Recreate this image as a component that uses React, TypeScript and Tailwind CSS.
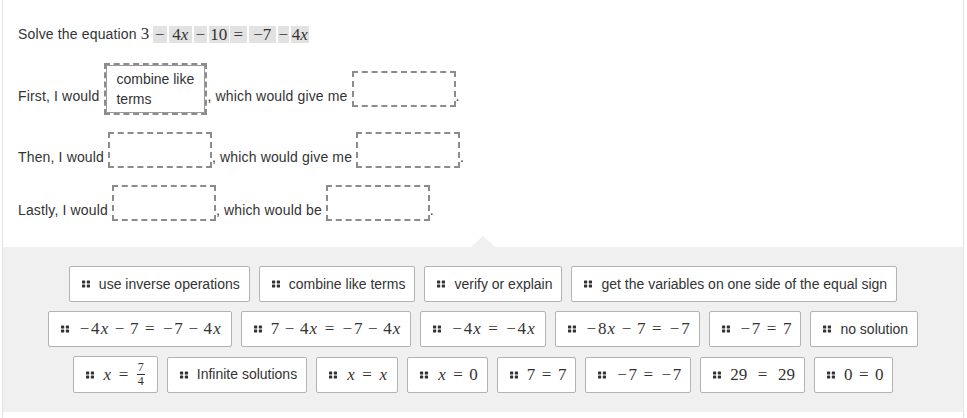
import type { ReactNode } from 'react';

type Tok = { t: string; kind: 'num' | 'var' | 'bin' | 'un' | 'rel' };

function tokenize(expr: string): Tok[] {
  const out: Tok[] = [];
  for (const ch of expr.replace(/\s+/g, '')) {
    const prev = out[out.length - 1];
    if (ch === '=') out.push({ t: ch, kind: 'rel' });
    else if (ch === '−')
      out.push({ t: ch, kind: prev && (prev.kind === 'num' || prev.kind === 'var') ? 'bin' : 'un' });
    else if (ch === 'x') out.push({ t: ch, kind: 'var' });
    else out.push({ t: ch, kind: 'num' });
  }
  return out;
}

// mimics the MathJax spacing of the original (17px TeX)
function MathExpr({ expr, wide = false }: { expr: string; wide?: boolean }) {
  return (
    <span className="inline-flex items-center font-['Liberation_Serif',serif] text-[17px] leading-[20px] tracking-normal text-[#333]">
      {tokenize(expr).map((tok, i) => {
        if (tok.kind === 'num')
          return (
            <span key={i} className="inline-block w-[8.5px] text-center">
              {tok.t}
            </span>
          );
        if (tok.kind === 'var')
          return (
            <span key={i} className="inline-block w-[9.7px] text-center italic">
              {tok.t}
            </span>
          );
        if (tok.kind === 'un')
          return (
            <span key={i} className="inline-block w-[13.2px] text-center">
              {tok.t}
            </span>
          );
        if (tok.kind === 'bin')
          return (
            <span key={i} className="inline-block w-[13.2px] mx-[3.8px] text-center">
              {tok.t}
            </span>
          );
        return (
          <span
            key={i}
            className={wide ? 'inline-block w-[13.2px] mx-[8.7px] text-center' : 'inline-block w-[13.2px] mx-[4.7px] text-center'}
          >
            {tok.t}
          </span>
        );
      })}
    </span>
  );
}

function GripIcon() {
  return (
    <svg width="8" height="8" viewBox="0 0 8 8" className="shrink-0">
      <rect x="0" y="0.5" width="3.2" height="3" rx="0.6" fill="#333" />
      <rect x="4.8" y="0.5" width="3.2" height="3" rx="0.6" fill="#333" />
      <rect x="0" y="4.5" width="3.2" height="3" rx="0.6" fill="#333" />
      <rect x="4.8" y="4.5" width="3.2" height="3" rx="0.6" fill="#333" />
    </svg>
  );
}

function Chip({ children, tall = false }: { children: ReactNode; tall?: boolean }) {
  return (
    <div
      className={
        tall
          ? 'flex items-center gap-[9px] h-[37px] pl-[12px] pr-[10px] bg-white border border-[#b3b3b3] rounded-[2px]'
          : 'flex items-center gap-[9px] h-[36px] pl-[12px] pr-[9px] bg-white border border-[#b3b3b3] rounded-[2px]'
      }
    >
      <GripIcon />
      {children}
    </div>
  );
}

function EmptySlot() {
  return <div className="w-[104px] h-[36px] ml-[4px] border-2 border-dashed border-[#8c8c8c] bg-white shrink-0" />;
}

function Sentence({ children }: { children: ReactNode }) {
  return <span className="mt-[13px] leading-[20px] whitespace-nowrap tracking-[0.15px]">{children}</span>;
}

function Fraction() {
  return (
    <span className="inline-flex items-center font-['Liberation_Serif',serif] text-[17px] text-[#333]">
      <span className="inline-block w-[9.7px] text-center italic">x</span>
      <span className="inline-block w-[13.2px] mx-[4.7px] text-center">=</span>
      <span className="inline-flex flex-col items-center mx-[2px] text-[12px] leading-[11px]">
        <span className="px-[1px] pb-[1px] border-b border-[#333]">7</span>
        <span className="pt-[1px]">4</span>
      </span>
    </span>
  );
}

const hl = 'inline-block h-[17px] leading-[17px] bg-[#e2e2e2] text-center';

export default function App() {
  return (
    <div className="min-h-[418px] bg-white font-['Liberation_Sans',Arial,sans-serif] text-[14px] text-[#333]">
      <div className="ml-[2px] w-[962px] min-h-[418px] border-x border-[#e3e3e3]">
        {/* Question */}
        <div className="pl-[15px] pt-[24px]">
          <div className="flex items-center h-[20px]">
            <span className="tracking-[0.15px]">Solve the equation</span>
            <span className="ml-[4px] flex items-center font-['Liberation_Serif',serif] text-[17px]">
              <span className="inline-block w-[8.5px] text-center">3</span>
              <span className={`${hl} ml-[3.5px] w-[14px]`}>−</span>
              <span className={`${hl} ml-[2px] w-[23px]`}>
                4<i>x</i>
              </span>
              <span className={`${hl} ml-[2px] w-[13px]`}>−</span>
              <span className={`${hl} ml-[2px] w-[20px]`}>10</span>
              <span className={`${hl} ml-[1px] w-[17px]`}>=</span>
              <span className={`${hl} ml-[2px] w-[27px]`}>−7</span>
              <span className={`${hl} ml-[2px] w-[11px]`}>−</span>
              <span className={`${hl} ml-[2px] w-[18px]`}>
                4<i>x</i>
              </span>
            </span>
          </div>

          <div className="mt-[19px] flex flex-col gap-[17px]">
            <div className="flex items-center">
              <Sentence>First, I would</Sentence>
              <div className="w-[103px] ml-[5px] border-2 border-dashed border-[#8c8c8c] shrink-0">
                <div className="border border-[#9a9a9a] bg-white px-[9px] py-[3px] leading-[20px]">
                  combine like terms
                </div>
              </div>
              <Sentence>, which would give me</Sentence>
              <EmptySlot />
              <Sentence>.</Sentence>
            </div>
            <div className="flex items-center">
              <Sentence>Then, I would</Sentence>
              <EmptySlot />
              <Sentence>, which would give me</Sentence>
              <EmptySlot />
              <Sentence>.</Sentence>
            </div>
            <div className="flex items-center">
              <Sentence>Lastly, I would</Sentence>
              <EmptySlot />
              <Sentence>, which would be</Sentence>
              <EmptySlot />
              <Sentence>.</Sentence>
            </div>
          </div>
        </div>

        {/* Answer tray */}
        <div className="relative mt-[26px] bg-[#f0f0f0] pt-[19px] pb-[19px] flex flex-col items-center gap-[9px]">
          <div className="absolute left-1/2 -translate-x-1/2 -top-[11px] w-0 h-0 border-x-[12px] border-x-transparent border-b-[11px] border-b-[#f0f0f0]" />
          <div className="flex justify-center gap-[9px]">
            <Chip>use inverse operations</Chip>
            <Chip>combine like terms</Chip>
            <Chip>verify or explain</Chip>
            <Chip>get the variables on one side of the equal sign</Chip>
          </div>
          <div className="flex justify-center gap-[9px]">
            <Chip>
              <MathExpr expr="−4x − 7 = −7 − 4x" />
            </Chip>
            <Chip>
              <MathExpr expr="7 − 4x = −7 − 4x" />
            </Chip>
            <Chip>
              <MathExpr expr="−4x = −4x" />
            </Chip>
            <Chip>
              <MathExpr expr="−8x − 7 = −7" />
            </Chip>
            <Chip>
              <MathExpr expr="−7 = 7" />
            </Chip>
            <Chip>no solution</Chip>
          </div>
          <div className="flex items-center justify-center gap-[9px]">
            <Chip tall>
              <Fraction />
            </Chip>
            <Chip>Infinite solutions</Chip>
            <Chip>
              <MathExpr expr="x = x" />
            </Chip>
            <Chip>
              <MathExpr expr="x = 0" />
            </Chip>
            <Chip>
              <MathExpr expr="7 = 7" />
            </Chip>
            <Chip>
              <MathExpr expr="−7 = −7" />
            </Chip>
            <Chip>
              <MathExpr expr="29 = 29" wide />
            </Chip>
            <Chip>
              <MathExpr expr="0 = 0" />
            </Chip>
          </div>
        </div>
      </div>
    </div>
  );
}
